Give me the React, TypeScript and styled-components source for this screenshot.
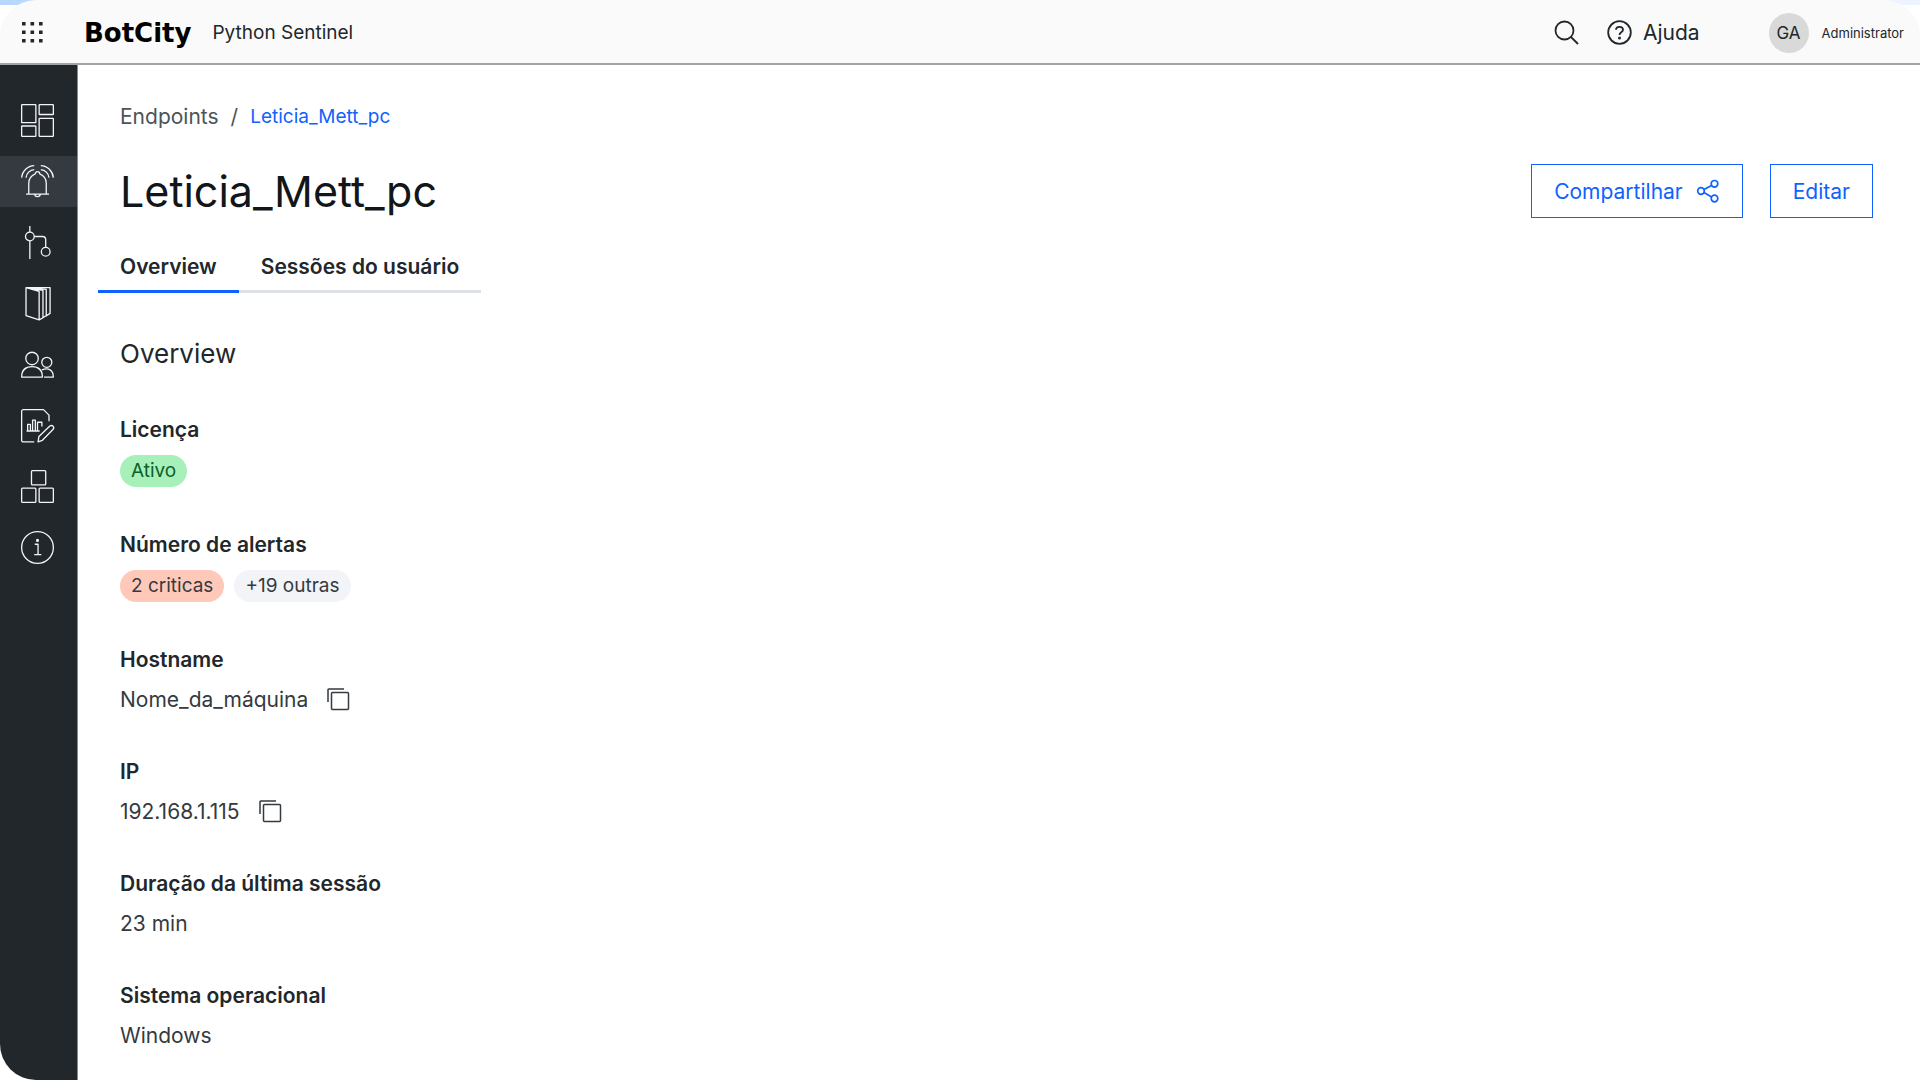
import React from "react";
import styled, { createGlobalStyle } from "styled-components";

const GlobalStyle = createGlobalStyle`
  * { box-sizing: border-box; }
  html, body, #root { height: 100%; }
  body {
    margin: 0;
    color: #21272a;
    font-family: Inter, "Liberation Sans", sans-serif;
    background: linear-gradient(90deg, #b9d7fe 0, #edf4ff 50%, #edf4ff 100%) top / 100% 5px no-repeat #fff;
  }
  button { font-family: inherit; color: inherit; background: none; border: 0; padding: 0; cursor: pointer; }
  a { color: inherit; text-decoration: none; }
  svg { display: block; flex: none; }
`;

const Shell = styled.div`
  display: flex;
  flex-direction: column;
  height: 100vh;
  overflow: hidden;
  border-radius: 36px;
`;

const Header = styled.header`
  display: flex;
  align-items: center;
  flex: none;
  height: 65px;
  padding: 2px 16px 0 20px;
  background: #fafafa;
  border-bottom: 2px solid #a3a4a5;
`;

const IconButton = styled.button`
  display: flex;
`;

const Brand = styled.a`
  margin-left: 39px;
  font: 700 26px/32px "DejaVu Sans", sans-serif;
  color: #000;
`;

const Product = styled.span`
  margin-left: 21px;
  font-size: 19px;
  line-height: 24px;
`;

const Tools = styled.div`
  display: flex;
  align-items: center;
  margin-left: auto;
`;

const Help = styled.a`
  display: flex;
  align-items: center;
  gap: 11px;
  margin: 0 69px 0 28px;
  font-size: 21px;
  line-height: 28px;
`;

const Account = styled.button`
  display: flex;
  align-items: center;
  gap: 13px;
  font-size: 13px;
`;

const Avatar = styled.span`
  display: grid;
  place-items: center;
  width: 40px;
  height: 40px;
  border-radius: 50%;
  background: #d9d9d9;
  font-size: 17px;
`;

const Body = styled.div`
  display: flex;
  flex: 1;
  min-height: 0;
`;

const Sidebar = styled.nav`
  display: flex;
  flex-direction: column;
  gap: 10px;
  flex: none;
  width: 78px;
  padding-top: 30px;
  background: #21272a;
  border-right: 1px solid #878b8d;
`;

const SideLink = styled.a<{ $active?: boolean }>`
  display: flex;
  align-items: center;
  height: 51px;
  padding-left: 20px;
  color: #f2f4f8;
  background: ${(p) => (p.$active ? "#343a3f" : "transparent")};
`;

const Main = styled.main`
  flex: 1;
  min-width: 0;
  padding: 38px 47px 0 42px;
  background: #fff;
  overflow: hidden;
`;

const Crumbs = styled.nav`
  display: flex;
  align-items: center;
  gap: 12px;
  font-size: 21px;
  line-height: 28px;
  color: #4d5358;
`;

const CurrentCrumb = styled.a`
  font-size: 19px;
  color: #0f62fe;
`;

const TitleRow = styled.div`
  display: flex;
  align-items: center;
  justify-content: space-between;
  margin-top: 33px;
`;

const Title = styled.h1`
  margin: 0;
  font-size: 43px;
  line-height: 54px;
  font-weight: 400;
  color: #121619;
`;

const Actions = styled.div`
  display: flex;
  gap: 27px;
`;

const OutlineButton = styled.button`
  display: flex;
  align-items: center;
  gap: 13px;
  height: 54px;
  padding: 0 22px;
  border: 1px solid #0f62fe;
  color: #0f62fe;
  font-size: 21px;
`;

const Tabs = styled.div`
  display: flex;
  width: fit-content;
  margin: 29px 0 0 -22px;
`;

const Tab = styled.button<{ $active?: boolean }>`
  height: 46px;
  padding: 0 22px 3px;
  border-bottom: 3px solid ${(p) => (p.$active ? "#0f62fe" : "#dde1e6")};
  font-size: 21px;
  line-height: 28px;
  font-weight: 600;
`;

const SectionTitle = styled.h2`
  margin: 43px 0 0;
  font-size: 26px;
  line-height: 36px;
  font-weight: 400;
`;

const Fields = styled.dl`
  display: flex;
  flex-direction: column;
  gap: 44px;
  margin: 44px 0 0;
  font-size: 21px;
  line-height: 28px;
`;

const Label = styled.dt`
  font-weight: 600;
  color: #21272a;
`;

const Value = styled.dd`
  display: flex;
  align-items: center;
  gap: 18px;
  min-height: 29px;
  margin: 11px 0 0;
  color: #343a3f;
`;

const PillRow = styled(Value)`
  gap: 10px;
`;

const tones = {
  green: ["#a7f0ba", "#0e6027"],
  red: ["#ffc9b9", "#343a3f"],
  gray: ["#f2f4f8", "#343a3f"],
};

const Pill = styled.span<{ $tone: keyof typeof tones }>`
  padding: 0 11px;
  border-radius: 16px;
  font-size: 19px;
  line-height: 32px;
  background: ${(p) => tones[p.$tone][0]};
  color: ${(p) => tones[p.$tone][1]};
`;

const Line = ({ size = 35, width = 1.2, box = 32, children }: {
  size?: number; width?: number; box?: number; children: React.ReactNode;
}) => (
  <svg width={size} height={size} viewBox={`0 0 ${box} ${box}`} fill="none" stroke="currentColor"
    strokeWidth={width} strokeLinejoin="round" aria-hidden="true">
    {children}
  </svg>
);

const sideItems: { name: string; icon: React.ReactNode }[] = [
  { name: "Painel", icon: <><rect x="1.5" y="1.5" width="13" height="16.5" rx=".5" /><rect x="17.5" y="1.5" width="13" height="9" rx=".5" /><rect x="1.5" y="21" width="13" height="9.5" rx=".5" /><rect x="17.5" y="14" width="13" height="16.5" rx=".5" /></> },
  { name: "Endpoints", icon: <><path d="M5.5 27.5h21M8 27.5V17.500c0-5 2.500-7 6-8.500a2 2 0 0 1 4 0c3.500 1.500 6 3.500 6 8.500v10M13.500 27.500c0 3.200 5 3.200 5 0" /><path d="M1.500 12.500A12 12 0 0 1 13 1.500M5.500 12.500A8 8 0 0 1 13 5.200M30.500 12.500A12 12 0 0 0 19 1.500M26.500 12.500A8 8 0 0 0 19 5.200" /></> },
  { name: "Fluxos", icon: <><circle cx="9" cy="10.500" r="4" /><circle cx="23.500" cy="24.500" r="4" /><path d="M9 1v5.500M9 14.500V31M13 10.500h7.500q3 0 3 3v7" /></> },
  { name: "Biblioteca", icon: <><path d="M5.500 1.500h22v23.500l-4 2.500M5.500 1.500v25.500l12 4V5zM5.500 1.500 21 4v25l-3.500 2M8 1.500l16 1.500v24l-3 2" /></> },
  { name: "Usuários", icon: <><circle cx="11" cy="10.500" r="5.700" /><path d="M1.500 27.500c0-6.500 4-9.500 9.500-9.500s9.500 3 9.500 9.500z" /><circle cx="24.500" cy="14" r="4.600" /><path d="M20 21c6-2.500 10.500 0 10.500 6.500H22" /></> },
  { name: "Relatórios", icon: <><path d="M13 31H3a1.500 1.500 0 0 1-1.500-1.500V3A1.500 1.500 0 0 1 3 1.500h18.500l5 5V12" /><path d="M6 21h12M7 21v-6h2.500v6M11.500 21V11H14v10M16 21v-8h4v4" /><path d="m16.500 31 .8-5 10-9.500c2.300-1.500 4.500.8 3 3L20.500 29.500z" /></> },
  { name: "Pacotes", icon: <><rect x="10.500" y="1.500" width="13" height="13" rx=".8" /><rect x="1.500" y="17.500" width="13" height="13" rx=".8" /><rect x="17.500" y="17.500" width="13" height="13" rx=".8" /></> },
  { name: "Informações", icon: <><circle cx="16" cy="16" r="14.500" /><path d="M13.500 13h3v9M13 22.500h6.500" /><circle cx="16" cy="9.500" r=".8" fill="currentColor" /></> },
];

const CopyIcon = () => (
  <Line size={24} box={24} width={1.5}>
    <rect x="5.500" y="4.500" width="17" height="17" rx="1" /><path d="M2 14V1.800Q2 1 2.800 1H18" />
  </Line>
);

const Field = ({ label, value, copy }: { label: string; value: string; copy?: boolean }) => (
  <div>
    <Label>{label}</Label>
    <Value>
      {value}
      {copy && <IconButton aria-label={`Copiar ${label}`}><CopyIcon /></IconButton>}
    </Value>
  </div>
);

export default function App() {
  return (
    <>
      <GlobalStyle />
      <Shell>
        <Header>
          <IconButton aria-label="Aplicativos">
            <svg width="25" height="25" viewBox="0 0 25 25" aria-hidden="true">
              {[2, 10.5, 19].map((y) => [2, 10.5, 19].map((x) => <rect key={`${x}-${y}`} x={x} y={y} width="3.600" height="3.600" rx=".5" fill="#21272a" />))}
            </svg>
          </IconButton>
          <Brand href="#">BotCity</Brand>
          <Product>Python Sentinel</Product>
          <Tools>
            <IconButton aria-label="Buscar">
              <Line size={25} box={25} width={1.8}><circle cx="10.500" cy="10.500" r="9" /><path d="m17 17 7 7" /></Line>
            </IconButton>
            <Help href="#">
              <Line size={25} box={25} width={1.8}>
                <circle cx="12.500" cy="12.500" r="11.300" /><path d="M9 9.800c0-4 7-4 7 0 0 2.700-3.500 2.200-3.500 5.200" /><circle cx="12.500" cy="18" r=".6" fill="currentColor" />
              </Line>
              Ajuda
            </Help>
            <Account><Avatar>GA</Avatar>Administrator</Account>
          </Tools>
        </Header>
        <Body>
          <Sidebar aria-label="Principal">
            {sideItems.map((item) => (
              <SideLink key={item.name} href="#" aria-label={item.name} $active={item.name === "Endpoints"}>
                <Line>{item.icon}</Line>
              </SideLink>
            ))}
          </Sidebar>
          <Main>
            <Crumbs aria-label="Trilha">
              <a href="#">Endpoints</a>
              <span>/</span>
              <CurrentCrumb href="#">Leticia_Mett_pc</CurrentCrumb>
            </Crumbs>
            <TitleRow>
              <Title>Leticia_Mett_pc</Title>
              <Actions>
                <OutlineButton>
                  Compartilhar
                  <Line size={24} box={24} width={1.7}>
                    <circle cx="5" cy="12" r="3.300" /><circle cx="18.500" cy="4.800" r="3.300" /><circle cx="18.500" cy="19.500" r="3.300" /><path d="m8 10.500 7.500-4M8 13.500l7.500 4.500" />
                  </Line>
                </OutlineButton>
                <OutlineButton>Editar</OutlineButton>
              </Actions>
            </TitleRow>
            <Tabs role="tablist">
              <Tab role="tab" aria-selected="true" $active>Overview</Tab>
              <Tab role="tab" aria-selected="false">Sessões do usuário</Tab>
            </Tabs>
            <SectionTitle>Overview</SectionTitle>
            <Fields>
              <div>
                <Label>Licença</Label>
                <PillRow><Pill $tone="green">Ativo</Pill></PillRow>
              </div>
              <div>
                <Label>Número de alertas</Label>
                <PillRow><Pill $tone="red">2 criticas</Pill><Pill $tone="gray">+19 outras</Pill></PillRow>
              </div>
              <Field label="Hostname" value="Nome_da_máquina" copy />
              <Field label="IP" value="192.168.1.115" copy />
              <Field label="Duração da última sessão" value="23 min" />
              <Field label="Sistema operacional" value="Windows" />
            </Fields>
          </Main>
        </Body>
      </Shell>
    </>
  );
}
